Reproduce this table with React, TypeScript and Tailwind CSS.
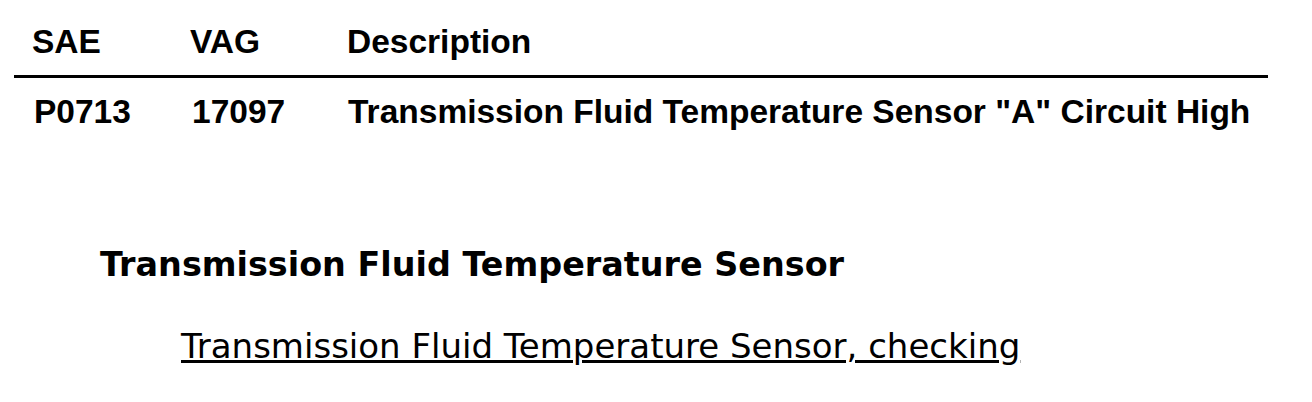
import React from 'react';

const arial = { fontFamily: '"Liberation Sans", Arial, sans-serif' };

const rows = [
  {
    sae: 'P0713',
    vag: '17097',
    desc: 'Transmission Fluid Temperature Sensor "A" Circuit High',
  },
];

export default function App() {
  return (
    <div className="w-[1312px] h-[402px] bg-white text-black overflow-hidden">
      <div className="px-[14px] pr-[44px]">
        <div
          className="grid grid-cols-[158px_157px_1fr] pl-[18px] font-bold text-[33.5px] leading-[37px] pt-[23px] pb-[15px] border-b-[3px] border-black"
          style={arial}
        >
          <div>SAE</div>
          <div>VAG</div>
          <div>Description</div>
        </div>
        {rows.map((r) => (
          <div
            key={r.sae}
            className="grid grid-cols-[158px_156px_1fr] pl-[20px] font-bold text-[33.5px] leading-[37px] pt-[15px] whitespace-nowrap"
            style={arial}
          >
            <div>{r.sae}</div>
            <div>{r.vag}</div>
            <div>{r.desc}</div>
          </div>
        ))}
      </div>

      <div className="font-['DejaVu_Sans',Verdana,sans-serif]">
        <h2 className="mt-[116px] pl-[100px] font-bold text-[33.4px] leading-[38px] whitespace-nowrap">
          Transmission Fluid Temperature Sensor
        </h2>
        <div className="mt-[43px] pl-[181px] text-[34px] leading-[38px] whitespace-nowrap">
          <a href="#" className="underline text-black">
            Transmission Fluid Temperature Sensor, checking
          </a>
        </div>
      </div>
    </div>
  );
}
